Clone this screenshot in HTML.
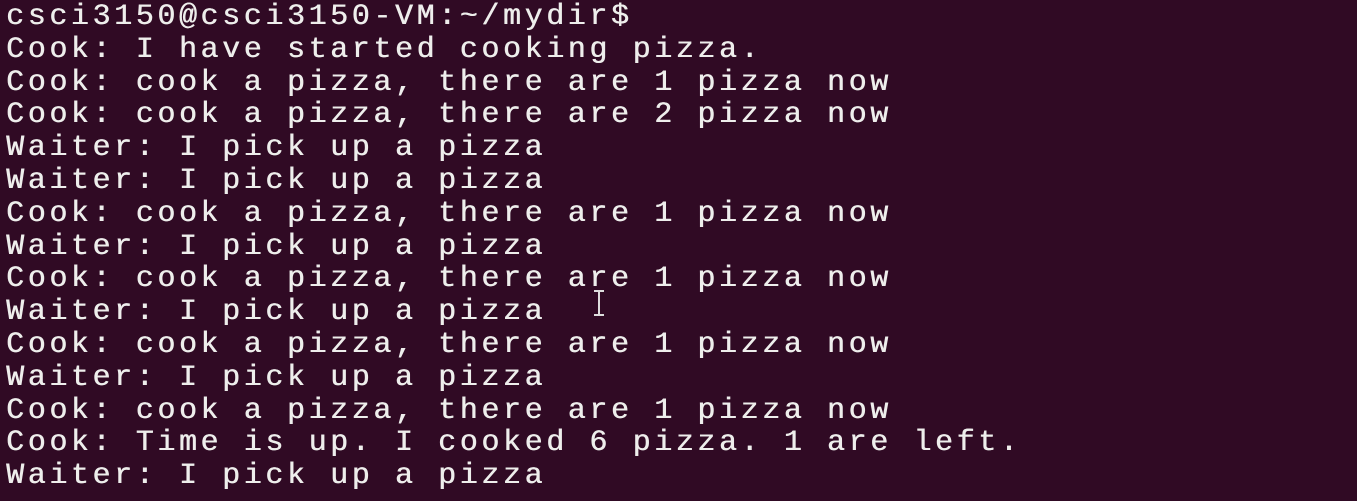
<!DOCTYPE html>
<html><head><meta charset="utf-8">
<style>
html,body{margin:0;padding:0;background:#300a24;width:1357px;height:501px;overflow:hidden}
pre{margin:0;position:absolute;left:6px;top:1px;font-family:"Liberation Mono",monospace;font-size:30px;letter-spacing:3.6px;line-height:32.8px;color:#eeeeec;text-shadow:0.5px 0 0 #eeeeec;}
.ib{position:absolute;left:598px;top:290px;width:2px;height:26px;background:#ddd}
.ib:before,.ib:after{content:"";position:absolute;left:-4px;width:10px;height:2px;background:#ddd}
.ib:before{top:0}.ib:after{bottom:0}
</style></head><body>
<pre>csci3150@csci3150-VM:~/mydir$
Cook: I have started cooking pizza.
Cook: cook a pizza, there are 1 pizza now
Cook: cook a pizza, there are 2 pizza now
Waiter: I pick up a pizza
Waiter: I pick up a pizza
Cook: cook a pizza, there are 1 pizza now
Waiter: I pick up a pizza
Cook: cook a pizza, there are 1 pizza now
Waiter: I pick up a pizza
Cook: cook a pizza, there are 1 pizza now
Waiter: I pick up a pizza
Cook: cook a pizza, there are 1 pizza now
Cook: Time is up. I cooked 6 pizza. 1 are left.
Waiter: I pick up a pizza</pre>
<div class="ib"></div>
</body></html>
